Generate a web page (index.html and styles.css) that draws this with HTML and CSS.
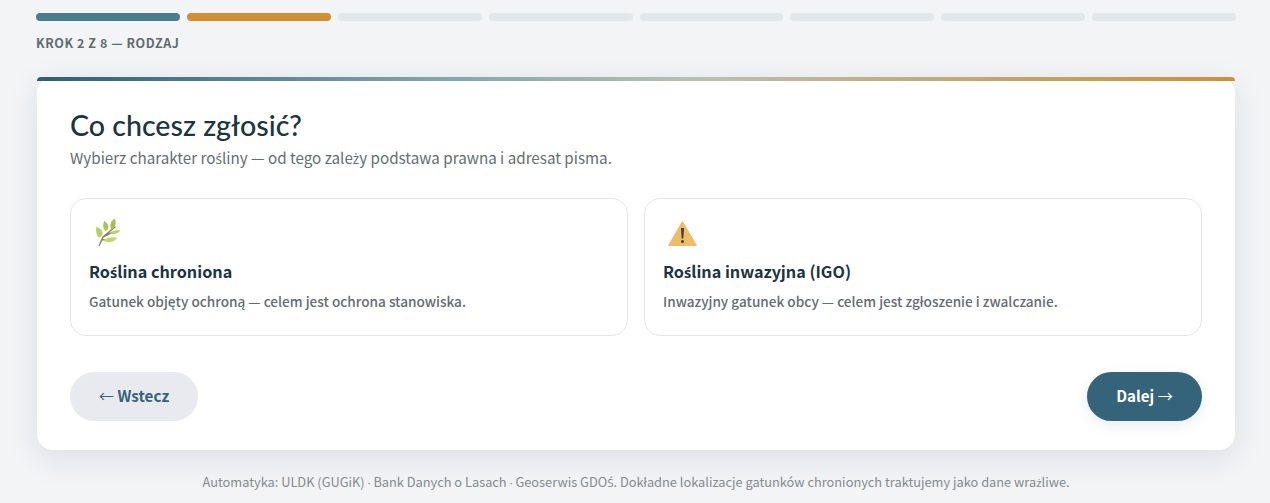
FILE: index.html
```html
<!DOCTYPE html>
<html lang="pl">
<head>
<meta charset="utf-8">
<title>Co chcesz zgłosić?</title>
<link rel="stylesheet" href="styles.css">
</head>
<body>
<main class="page">
  <div class="progress">
    <span class="seg seg-done"></span>
    <span class="seg seg-active"></span>
    <span class="seg"></span>
    <span class="seg"></span>
    <span class="seg"></span>
    <span class="seg"></span>
    <span class="seg"></span>
    <span class="seg"></span>
  </div>
  <p class="step-label">KROK 2 Z 8 — RODZAJ</p>
  <section class="card">
    <h1 class="title">Co chcesz zgłosić?</h1>
    <p class="subtitle">Wybierz charakter ro<span class="pl">ś</span>liny — od tego zale<span class="pl">ż</span>y podstawa prawna i adresat pisma.</p>
    <div class="options">
      <article class="option">
        <svg class="icon" viewBox="0 0 32 28" aria-hidden="true">
          <path d="M6.3 27.5 L10 19 L22 9 M10 19 L19 14.5 M9 21.5 L15 22" fill="none" stroke="#8a8560" stroke-width="1.4" stroke-linecap="round"/>
          <path d="M5.6 19.5 C3.2 16 2.6 12.4 3.4 8.7 C6.8 10.2 9.8 12.6 9.6 15.4 C9.4 17.2 7.6 18.8 5.6 19.5 Z" fill="#b6d25e"/>
          <path d="M12.6 13 C10.4 11 9.2 7.6 11.2 3 C14 4.4 15.8 7.4 15.4 9.8 C15.1 11.2 14 12.4 12.6 13 Z" fill="#a8c75a"/>
          <path d="M18.6 11.6 C16.6 9 16.6 3.6 21.6 0.4 C23.4 3.4 23.2 8.6 18.6 11.6 Z" fill="#a3c255"/>
          <path d="M17 15.6 C18.4 13 22.4 11.6 27.2 12.6 C25.6 15.4 21.6 17.2 17 15.6 Z" fill="#b6d25e"/>
          <path d="M10.2 22.6 C12.4 19.8 18.4 18.4 24 19.8 C22.4 23.6 15.4 26.2 10.2 22.6 Z" fill="#bfd771"/>
        </svg>
        <h2 class="option-title">Ro<span class="pl">ś</span>lina chroniona</h2>
        <p class="option-text">Gatunek objęty ochroną — celem jest ochrona stanowiska.</p>
      </article>
      <article class="option">
        <svg class="icon" viewBox="0 0 32 28" aria-hidden="true">
          <path d="M15.5 3.5 L29.5 27.5 L1.5 27.5 Z" fill="#eebd6b" stroke="#eebd6b" stroke-width="1" stroke-linejoin="round"/>
          <path d="M14 10 H17 L16.3 20.5 H14.7 Z" fill="#473a2a"/>
          <circle cx="15.5" cy="23.6" r="1.5" fill="#473a2a"/>
        </svg>
        <h2 class="option-title">Ro<span class="pl">ś</span>lina inwazyjna (IGO)</h2>
        <p class="option-text">Inwazyjny gatunek obcy — celem jest zgłoszenie i zwalczanie.</p>
      </article>
    </div>
    <div class="actions">
      <button class="btn btn-back" type="button"><span class="arrow">←</span> Wstecz</button>
      <button class="btn btn-next" type="button">Dalej <span class="arrow">→</span></button>
    </div>
  </section>
  <p class="footnote">Automatyka: ULDK (GUGiK) <span class="pl">·</span> Bank Danych o Lasach <span class="pl">·</span> Geoserwis GDO<span class="pl">Ś</span>. Dokładne lokalizacje gatunków chronionych traktujemy jako dane wra<span class="pl">ż</span>liwe.</p>
</main>
</body>
</html>
```
FILE: styles.css
```css
* { box-sizing: border-box; }
html, body { margin: 0; height: 503px; overflow: hidden; }
body {
  background: #f2f4f6;
  color: #1d3441;
  font-family: "Noto Sans CJK JP", "Noto Sans", sans-serif;
}
.pl { font-family: "Noto Sans", sans-serif; font-size: 0.9em; line-height: 1; }
.arrow { font-weight: 400; line-height: 1; }
.page { width: 1200px; margin: 0 0 0 36px; padding-top: 13px; }
.progress { display: flex; gap: 7px; }
.seg { flex: 1; height: 8px; border-radius: 4px; background: #e2e7e9; }
.seg-done { background: #4a7c8c; }
.seg-active { background: #cf8f33; }
.step-label {
  margin: 13px 0 0;
  font-size: 12.5px;
  line-height: 17px;
  font-weight: 700;
  letter-spacing: 0.56px;
  color: #626b6f;
}
.card {
  position: relative;
  margin: 26px 1px 0;
  height: 373px;
  padding: 31px 33px 0;
  background: #fff;
  border-radius: 16px;
  box-shadow: 0 8px 32px rgba(30, 50, 65, 0.1);
}
.card::before {
  content: "";
  position: absolute;
  inset: 0 0 auto 0;
  height: 4px;
  border-radius: 4px 4px 0 0;
  background: linear-gradient(90deg, #2f5f70 0%, #7fa5ad 33%, #b9c0b0 55%, #cf8f33 100%);
}
.title {
  margin: 0;
  font-family: "Lato", sans-serif;
  font-size: 28.6px;
  line-height: 34px;
  font-weight: 500;
  color: #1b3442;
}
.subtitle {
  margin: 5px 0 0;
  font-size: 15.2px;
  line-height: 20px;
  color: #646d72;
}
.options { display: grid; grid-template-columns: 1fr 1fr; gap: 16px; margin-top: 31px; }
.option {
  height: 138px;
  padding: 19px 18px 0;
  background: #fff;
  border: 1px solid #e3e6e9;
  border-radius: 16px;
}
.icon { display: block; width: 32px; height: 28px; margin-left: 4px; }
.option-title {
  margin: 13px 0 0;
  font-size: 16.2px;
  line-height: 24px;
  font-weight: 700;
  color: #1b3442;
}
.option-text {
  margin: 8px 0 0;
  font-size: 13.6px;
  line-height: 20px;
  font-weight: 500;
  color: #646d72;
}
.actions { display: flex; justify-content: space-between; margin-top: 36px; }
.btn {
  height: 49px;
  padding: 0 0 3px;
  border: 0;
  border-radius: 25px;
  font-family: inherit;
  font-size: 15.2px;
  font-weight: 700;
}
.btn-back { width: 128px; background: #e9eaef; color: #35647a; }
.btn-next {
  width: 115px;
  background: #35647a;
  color: #fff;
  box-shadow: 0 4px 14px rgba(53, 100, 122, 0.12);
}
.footnote {
  margin: 23px 0 0;
  text-align: center;
  font-size: 12.8px;
  line-height: 18px;
  color: #868c90;
}
```
